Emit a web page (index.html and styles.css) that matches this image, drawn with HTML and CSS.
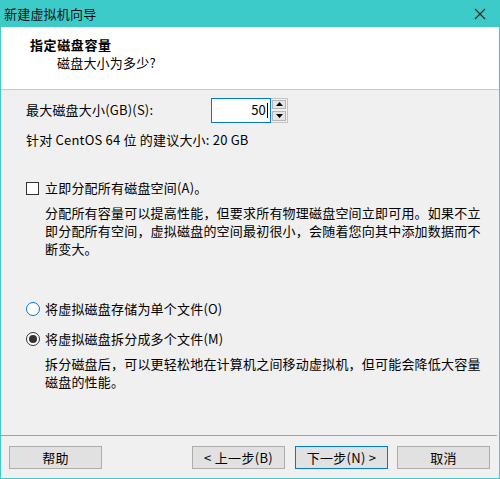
FILE: index.html
```html
<!DOCTYPE html>
<html lang="zh-CN">
<head>
  <meta charset="UTF-8">
  <title>新建虚拟机向导</title>
  <link rel="stylesheet" href="styles.css">
</head>
<body>

  <div class="window">
    <!-- 标题栏 -->
    <div class="titlebar">
      <span class="title">新建虚拟机向导</span>
      <svg class="close" width="12" height="12" viewBox="0 0 12 12">
        <path d="M1,1 L11,11 M11,1 L1,11"></path>
      </svg>
    </div>

    <!-- 页头 -->
    <div class="header">
      <div class="h-title">指定磁盘容量</div>
      <div class="h-sub">磁盘大小为多少?</div>
    </div>

    <!-- 内容 -->
    <div class="content">
      <div class="size-row">
        <span class="size-label">最大磁盘大小(GB)(S):</span>
        <div class="spin">
          <div class="spin-input"><span>50</span><i class="caret"></i></div>
          <div class="spin-btns">
            <div class="spin-btn"><svg width="7" height="4" viewBox="0 0 7 4"><polygon points="0,4 7,4 3.5,0"></polygon></svg></div>
            <div class="spin-btn"><svg width="7" height="4" viewBox="0 0 7 4"><polygon points="0,0 7,0 3.5,4"></polygon></svg></div>
          </div>
        </div>
      </div>

      <div class="recommend">针对 CentOS 64 位 的建议大小: 20 GB</div>

      <div class="option check-row">
        <span class="checkbox"></span>
        <span>立即分配所有磁盘空间(A)。</span>
      </div>
      <p class="desc">分配所有容量可以提高性能，但要求所有物理磁盘空间立即可用。如果不立<br>即分配所有空间，虚拟磁盘的空间最初很小，会随着您向其中添加数据而不<br>断变大。</p>

      <div class="option radio-row1">
        <span class="radio hover"></span>
        <span>将虚拟磁盘存储为单个文件(O)</span>
      </div>
      <div class="option radio-row2">
        <span class="radio checked"></span>
        <span>将虚拟磁盘拆分成多个文件(M)</span>
      </div>
      <p class="desc">拆分磁盘后，可以更轻松地在计算机之间移动虚拟机，但可能会降低大容量<br>磁盘的性能。</p>
    </div>

    <!-- 按钮 -->
    <div class="footer">
      <button class="btn">帮助</button>
      <div class="spacer"></div>
      <button class="btn">&lt; 上一步(B)</button>
      <button class="btn btn-default">下一步(N) &gt;</button>
      <button class="btn">取消</button>
    </div>
  </div>

</body>
</html>
```

FILE: styles.css
```css
*{
  box-sizing: border-box;
}

body{
  margin: 0;
  font-family: "Noto Sans CJK SC", "Noto Sans", sans-serif;
  font-size: 13px;
  letter-spacing: 0.2px;
  color: #000;
  overflow: hidden;
}

.window{
  width: 500px;
  height: 479px;
  display: flex;
  flex-direction: column;
  border: 1px solid #3ccbc8;
  border-top: none;
  background: #f0f0f0;
}

/* 标题栏 */
.titlebar{
  height: 27px;
  margin: 0 -1px;
  padding: 0 14px 0 4px;
  background: #3ccbc8;
  display: flex;
  align-items: center;
  justify-content: space-between;
  color: #111;
}
.titlebar .title{
  line-height: 27px;
}
.close{
  fill: none;
  stroke: #1a2a2a;
  stroke-width: 1.1;
}

/* 页头 */
.header{
  height: 63px;
  background: #fff;
  border-bottom: 1px solid #c8c8c8;
  padding-top: 9px;
  line-height: 18px;
}
.h-title{
  padding-left: 29px;
  font-weight: 700;
  letter-spacing: 0.6px;
}
.h-sub{
  padding-left: 56px;
}

/* 内容 */
.content{
  flex: 1;
  padding: 8px 0 0 25px;
  line-height: 18px;
}

.size-row{
  display: flex;
  align-items: center;
  height: 24px;
}
.size-label{
  width: 185px;
}
.spin{
  display: flex;
  height: 25px;
}
.spin-input{
  width: 60px;
  height: 25px;
  background: #fff;
  border: 1px solid #0078d7;
  display: flex;
  align-items: center;
  justify-content: flex-end;
  padding-right: 2px;
}
.caret{
  display: inline-block;
  width: 1px;
  height: 15px;
  background: #000;
  margin-left: 1px;
}
.spin-btns{
  width: 17px;
  display: flex;
  flex-direction: column;
  border: 1px solid #c4c4c4;
  border-left: none;
  background: #f0f0f0;
}
.spin-btn{
  flex: 1;
  display: flex;
  align-items: center;
  justify-content: center;
  border: 1px solid #b5b5b5;
  margin: 1px;
  background: #e5e5e5;
}
.spin-btn svg{
  fill: #000;
}

.recommend{
  margin-top: 9px;
}

.option{
  display: flex;
  align-items: center;
  height: 18px;
}
.check-row{
  margin-top: 30px;
}
.radio-row1{
  margin-top: 42px;
}
.radio-row2{
  margin-top: 12px;
}

.checkbox{
  width: 13px;
  height: 13px;
  border: 1px solid #333;
  background: #fff;
  margin-right: 6px;
}
.radio{
  width: 14px;
  height: 14px;
  border-radius: 50%;
  border: 1px solid #333;
  background: #fff;
  margin-right: 5px;
  display: flex;
  align-items: center;
  justify-content: center;
}
.radio.hover{
  border-color: #0078d7;
}
.radio.checked::after{
  content: "";
  width: 8px;
  height: 8px;
  border-radius: 50%;
  background: #333;
}

.desc{
  margin: 7px 0 0 19px;
}

/* 按钮 */
.footer{
  height: 43px;
  margin-right: 2px;
  border-top: 1px solid #a0a0a0;
  padding: 10px 7px 0 8px;
  display: flex;
  align-items: flex-start;
  gap: 9px;
}
.spacer{
  flex: 1;
}
.btn{
  width: 93px;
  height: 23px;
  padding: 0;
  font: inherit;
  letter-spacing: 0.3px;
  color: #000;
  background: #e1e1e1;
  border: 1px solid #adadad;
}
.btn-default{
  border: 1px solid #0078d7;
  margin-left: 1px;
}
```
